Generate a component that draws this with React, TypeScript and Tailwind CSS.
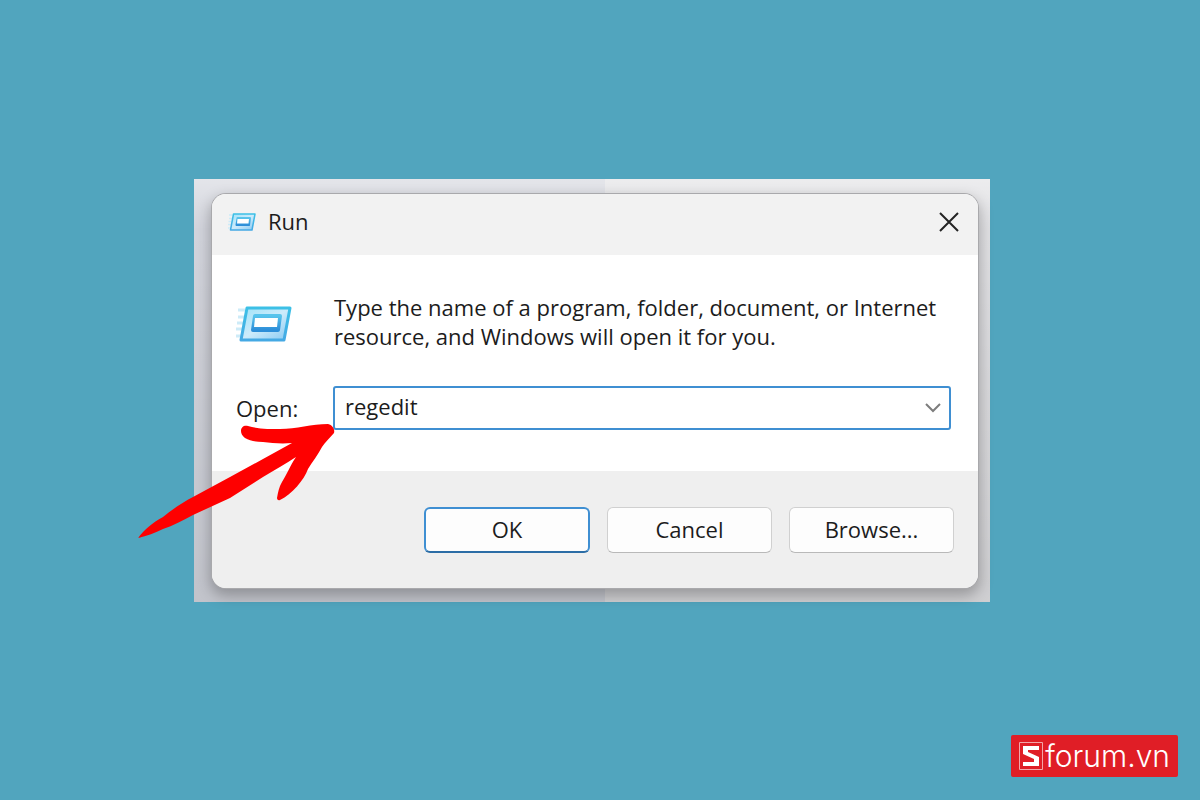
import React, { useState } from "react";

function RunIcon({ className }: { className?: string }) {
  return (
    <svg viewBox="0 0 56 38" className={className} aria-hidden="true">
      <defs>
        <linearGradient id="runEdge" x1="0" y1="0" x2="0" y2="1">
          <stop offset="0" stopColor="#3cc0e6" />
          <stop offset="1" stopColor="#45a9e4" />
        </linearGradient>
        <linearGradient id="runFace" x1="0" y1="0" x2="1" y2="1">
          <stop offset="0" stopColor="#9fe3f8" />
          <stop offset="0.5" stopColor="#cdebfb" />
          <stop offset="1" stopColor="#86c8f2" />
        </linearGradient>
        <linearGradient id="runInner" x1="0" y1="0" x2="0" y2="1">
          <stop offset="0" stopColor="#58c4ec" />
          <stop offset="1" stopColor="#2d8ed8" />
        </linearGradient>
      </defs>
      <path d="M2 5H9M2 12H8M1 18H7M0 24H6M0 31H5" stroke="#cdebf8" strokeWidth="3" />
      <path
        d="M11 3H54L48 35H5Z"
        fill="url(#runFace)"
        stroke="url(#runEdge)"
        strokeWidth="3"
        strokeLinejoin="round"
      />
      <path
        d="M19 11H44L42 25H17Z"
        fill="url(#runInner)"
        stroke="url(#runInner)"
        strokeWidth="4"
        strokeLinejoin="round"
      />
      <path d="M19 13H42L41 22H18Z" fill="#fff" />
    </svg>
  );
}

function Arrow() {
  return (
    <svg
      width="200"
      height="120"
      viewBox="0 0 200 120"
      className="pointer-events-none absolute -left-[56px] top-[241px]"
      aria-hidden="true"
    >
      <path
        d="M0 118C7 109 14 103 25 97C35 89 45 82 55 77L92 57L125 39L154 23C143 24 134 23 125 22C118 22 112 21 107 18C104 16 103 13 103 11C103 7 106 5 110 6C120 9 132 9 142 9C158 9 174 4 190 4C195 5 197 10 196 13C192 18 187 22 184 27C180 35 174 42 170 49C166 60 154 74 142 80C140 81 139 79 139 78C140 72 141 67 144 62C149 54 152 46 158 37C148 44 136 50 125 57L92 78L55 95C45 100 35 106 25 109C17 113 9 116 0 118Z"
        fill="#fe0000"
      />
    </svg>
  );
}

function Brand() {
  return (
    <a
      href="#"
      className="flex h-[42px] items-center gap-0.5 rounded-xs bg-[#e01e26] px-2 text-white font-['Inter',sans-serif] text-[30px] font-light leading-none"
    >
      <svg width="24" height="28" viewBox="0 0 24 28" role="img" aria-label="S">
        <path d="M0.500 0.500H23.500V27.500H0.500Z" fill="none" stroke="#f3a5a8" />
        <path d="M4 4H20V8H9V10L20 15V24H4V20H15V17L4 12Z" fill="#fff" />
      </svg>
      <span>forum.vn</span>
    </a>
  );
}

const plainButton =
  "h-[46px] w-[165px] rounded-md border border-[#d0d0d0] border-b-[#b9b9b9] bg-[#fdfdfd] pb-0.5";

export default function App() {
  const [command, setCommand] = useState("regedit");

  return (
    <main className="flex min-h-screen flex-col bg-[#51a5be] pt-[179px] font-['Open_Sans',sans-serif] text-[22px] text-[#1c1c1c]">
      <div className="flex justify-center pr-4">
        <div className="relative w-full max-w-[796px] bg-[linear-gradient(to_bottom,rgba(255,255,255,0.4),rgba(255,255,255,0)_12%,rgba(0,0,0,0.08)),linear-gradient(to_right,#d2d4dc_411px,#e0e0e3_411px)] pb-[14px] pl-[18px] pr-3 pt-[15px]">
          <section
            aria-labelledby="run-title"
            className="overflow-hidden rounded-[14px] bg-white shadow-[0_0_0_1px_#a9a9ac,0_6px_14px_2px_rgba(0,0,0,0.26)]"
          >
            <header className="flex h-[61px] items-center bg-[#f2f2f2] pb-1.5 pl-4 pr-[18px]">
              <RunIcon className="h-5 w-7" />
              <h1 id="run-title" className="ml-3">
                Run
              </h1>
              <button type="button" aria-label="Close" className="ml-auto">
                <svg width="22" height="22" viewBox="0 0 22 22">
                  <path d="M2 2L20 20M20 2L2 20" stroke="#242424" strokeWidth="2" />
                </svg>
              </button>
            </header>

            <div className="px-6 pb-[41px] pt-[38px]">
              <div className="flex">
                <div className="w-[98px] shrink-0 pt-3">
                  <RunIcon className="h-[38px] w-14" />
                </div>
                <p className="leading-[29px]">
                  Type the name of a program, folder, document, or Internet
                  resource, and Windows will open it for you.
                </p>
              </div>
              <div className="mt-[35px] flex items-center">
                <label htmlFor="command" className="w-[97px] shrink-0">
                  Open:
                </label>
                <div className="mr-[3px] flex h-11 grow items-center rounded-[3px] border-2 border-[#3f8fd2] bg-white">
                  <input
                    id="command"
                    type="text"
                    value={command}
                    onChange={(e) => setCommand(e.target.value)}
                    className="min-w-0 grow pb-1 pl-[10px] outline-none"
                  />
                  <button type="button" aria-label="Show history" className="px-2">
                    <svg width="16" height="10" viewBox="0 0 16 10">
                      <path d="M1 1L8 8L15 1" fill="none" stroke="#7d7d7d" strokeWidth="2" />
                    </svg>
                  </button>
                </div>
              </div>
            </div>

            <footer className="flex justify-end gap-[17px] bg-[#efefef] pb-[35px] pl-6 pr-6 pt-9">
              <button
                type="button"
                className="h-[46px] w-[166px] rounded-md border-2 border-[#3f8fd2] border-b-[#2c6da6] bg-[#fdfdfd] pb-0.5"
              >
                OK
              </button>
              <button type="button" className={plainButton}>
                Cancel
              </button>
              <button type="button" className={plainButton}>
                Browse...
              </button>
            </footer>
          </section>
          <Arrow />
        </div>
      </div>

      <div className="mt-auto flex justify-end pb-[23px] pr-[22px] pt-6">
        <Brand />
      </div>
    </main>
  );
}
